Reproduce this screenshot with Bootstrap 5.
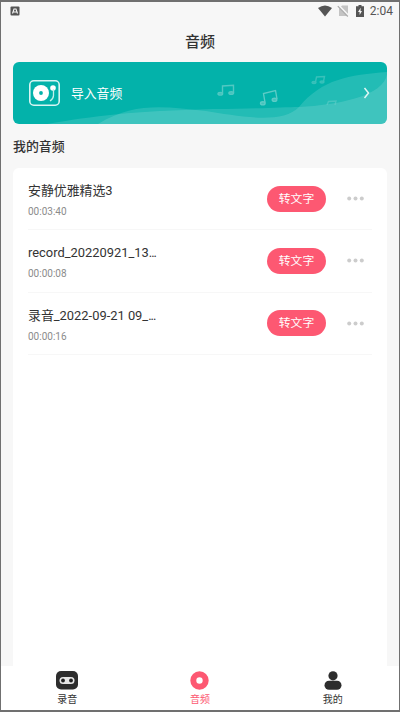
<!DOCTYPE html>
<html lang="zh-CN">
<head>
<meta charset="utf-8">
<meta name="viewport" content="width=device-width, initial-scale=1">
<title>音频</title>
<link href="https://cdn.jsdelivr.net/npm/bootstrap@5.3.0/dist/css/bootstrap.min.css" rel="stylesheet">
<style>
body{font-family:Roboto,"Noto Sans CJK SC",sans-serif;color:#333}
.screen{height:712px;background:#f7f7f7;border:1px solid #707070;border-top-width:2px;border-bottom-width:2px;overflow:hidden}
.status{height:18px;padding:0 6px 0 9px;font-size:12px;line-height:18px;color:#555}
.status svg{display:block}
.sim{margin-left:5px}
.battery{margin-left:7px}
.clock{margin-left:6px}
.title{height:42px;font-size:15px;line-height:44px;font-weight:500;color:#333}
.banner{height:62px;margin:0 12px;border-radius:6px;background:#03b2aa;color:#fff}
.banner-art{left:0;top:0}
.banner-row{padding:0 17px 0 16px;font-size:12.8px}
.banner-label{margin-left:11px;padding-top:2px}
.section{margin:0 12px;height:44px;line-height:46px;font-size:12.9px;font-weight:500;color:#333}
.tracks{margin:0 12px;padding:0 15px;background:#fff;border-radius:6px 6px 0 0}
.track{height:62.3px;border-bottom:1px solid #f7f7f7}
.track-name{width:150px;font-size:12.9px;line-height:19px;margin-top:2px}
.track-name i{font-style:normal;letter-spacing:-1px}
.track-time{font-size:10px;line-height:12px;margin-top:6px;color:#8b8b8b}
.convert{width:59px;height:26px;line-height:27px;padding:0;border:0;border-radius:13px;background:#fd5872;color:#fff;font-size:11.8px}
.convert:hover{background:#fd5872;color:#fff}
.more{margin:0 8px 0 21px}
.tabs{height:44px;background:#fff;font-size:10px;line-height:14px}
.tab{padding-top:5px}
.tab svg{display:block;margin-bottom:3px}
.tab-on{color:#fd5872}
</style>
</head>
<body>
<div class="screen d-flex flex-column">
  <div class="status d-flex align-items-center justify-content-between">
    <svg width="10" height="10" viewBox="0 0 10 10"><rect x=".5" y=".5" width="9" height="9" rx="1" fill="#555"/><path d="M2.5 7.500 4 3h2l1.500 4.500M3.500 6h3" fill="none" stroke="#f7f7f7" stroke-width="1.100"/></svg>
    <div class="d-flex align-items-center">
      <svg width="14" height="12" viewBox="0 0 14 12"><path d="M0 3Q7-2 14 3L7 11.500Z" fill="#555"/></svg>
      <svg class="sim" width="12" height="12" viewBox="0 0 12 12"><path d="M5 .5h6v10.500H2V3.500z" fill="#c4c4c4"/><path d="m1.500.5 10 10.500" stroke="#f7f7f7" stroke-width="2.400"/><path d="m.8 1.200 10 10.300" stroke="#a9a9a9" stroke-width="1.200"/></svg>
      <svg class="battery" width="8" height="12" viewBox="0 0 8 12"><path d="M2.500 0h3v1.300H8V12H0V1.300h2.500z" fill="#555"/><path d="M4.700 2.800 2 7h1.600v3L6 5.900H4.500z" fill="#f7f7f7"/></svg>
      <span class="clock">2:04</span>
    </div>
  </div>
  <header class="title text-center">音频</header>
  <div class="banner position-relative overflow-hidden flex-shrink-0">
    <svg class="banner-art position-absolute" width="374" height="62" viewBox="0 0 374 62">
      <path d="M34 62C80 54 120 49 200 47C240 47 270 45 286 45C325 43 371 34 374 12V62Z" fill="#fff" fill-opacity=".13"/>
      <path d="M85 62C122 39 154 45 193 49C225 54 269 63 286 45C309 17 336 13 374 10V62Z" fill="#fff" fill-opacity=".13"/>
      <g fill="#4dc6c0" stroke="#6dd0cb" stroke-width="1.400">
        <g opacity=".75"><path d="M209.500 31.500v-7.500l11-.8v8" fill="none"/><ellipse cx="207.300" cy="31.800" rx="2.300" ry="1.300"/><ellipse cx="218.200" cy="31" rx="2.300" ry="1.300"/></g>
        <g opacity=".85"><path d="M252 40.500 250.500 31.500 262.500 28.500 264 37" fill="none"/><ellipse cx="249.800" cy="41.300" rx="2.300" ry="1.600"/><ellipse cx="261.500" cy="37.800" rx="2.300" ry="1.600"/></g>
        <g opacity=".5"><path d="m302.500 20 1-5 8-.5-1 5" fill="none"/><ellipse cx="301" cy="20.500" rx="2" ry="1"/><ellipse cx="309" cy="20" rx="2" ry="1"/><path d="m314 43 1.500-3.500 7.500-.5-1 4" fill="none"/></g>
      </g>
    </svg>
    <div class="banner-row position-relative h-100 d-flex align-items-center">
      <svg width="31" height="26" viewBox="0 0 31 26"><rect x=".8" y=".8" width="29.400" height="24.400" rx="4" fill="none" stroke="#d8f5f3" stroke-width="1.600"/><circle cx="12" cy="13" r="8" fill="#fff"/><circle cx="12" cy="13" r="1.900" fill="#03b2aa"/><circle cx="24" cy="8" r="2.800" fill="#fff"/><path d="M24.500 9v6.500q0 3-3.500 5.500" fill="none" stroke="#c3efec" stroke-width="1.300"/></svg>
      <span class="banner-label">导入音频</span>
      <svg class="ms-auto" width="7" height="12" viewBox="0 0 7 12"><path d="m1.500 1 4 5-4 5" fill="none" stroke="#e0f7f5" stroke-width="1.500"/></svg>
    </div>
  </div>
  <h1 class="section mb-0">我的音频</h1>
  <main class="tracks flex-grow-1">
    <div class="track d-flex align-items-center">
      <div><div class="track-name">安静优雅精选3</div><div class="track-time">00:03:40</div></div>
      <button class="convert btn ms-auto">转文字</button>
      <svg class="more" width="17" height="5" viewBox="0 0 17 5" fill="#ccc"><circle cx="2.200" cy="2.500" r="2"/><circle cx="8.500" cy="2.500" r="2"/><circle cx="14.800" cy="2.500" r="2"/></svg>
    </div>
    <div class="track d-flex align-items-center">
      <div><div class="track-name">record_20220921_13<i>...</i></div><div class="track-time">00:00:08</div></div>
      <button class="convert btn ms-auto">转文字</button>
      <svg class="more" width="17" height="5" viewBox="0 0 17 5" fill="#ccc"><circle cx="2.200" cy="2.500" r="2"/><circle cx="8.500" cy="2.500" r="2"/><circle cx="14.800" cy="2.500" r="2"/></svg>
    </div>
    <div class="track d-flex align-items-center">
      <div><div class="track-name">录音_2022-09-21 09_<i>...</i></div><div class="track-time">00:00:16</div></div>
      <button class="convert btn ms-auto">转文字</button>
      <svg class="more" width="17" height="5" viewBox="0 0 17 5" fill="#ccc"><circle cx="2.200" cy="2.500" r="2"/><circle cx="8.500" cy="2.500" r="2"/><circle cx="14.800" cy="2.500" r="2"/></svg>
    </div>
  </main>
  <nav class="tabs d-flex flex-shrink-0">
    <div class="tab col-4 d-flex flex-column align-items-center">
      <svg width="22" height="19" viewBox="0 0 22 19"><rect width="22" height="18.500" rx="5" fill="#2d2d2d"/><rect x="3.500" y="6" width="15" height="7" rx="3.500" fill="#e6e6e6"/><circle cx="7" cy="9.500" r="1.900" fill="#222"/><circle cx="15" cy="9.500" r="1.900" fill="#222"/></svg>
      <span>录音</span>
    </div>
    <div class="tab tab-on col-4 d-flex flex-column align-items-center">
      <svg width="19" height="19" viewBox="0 0 19 19"><circle cx="9.500" cy="9.500" r="6.200" fill="none" stroke="#fd5872" stroke-width="6"/></svg>
      <span>音频</span>
    </div>
    <div class="tab col-4 d-flex flex-column align-items-center">
      <svg width="18" height="19" viewBox="0 0 18 19" fill="#2d2d2d"><circle cx="9" cy="4.800" r="4.600"/><rect x=".5" y="9.800" width="17" height="9" rx="4.500"/></svg>
      <span>我的</span>
    </div>
  </nav>
</div>
<script src="https://cdn.jsdelivr.net/npm/bootstrap@5.3.0/dist/js/bootstrap.bundle.min.js"></script>
</body>
</html>
